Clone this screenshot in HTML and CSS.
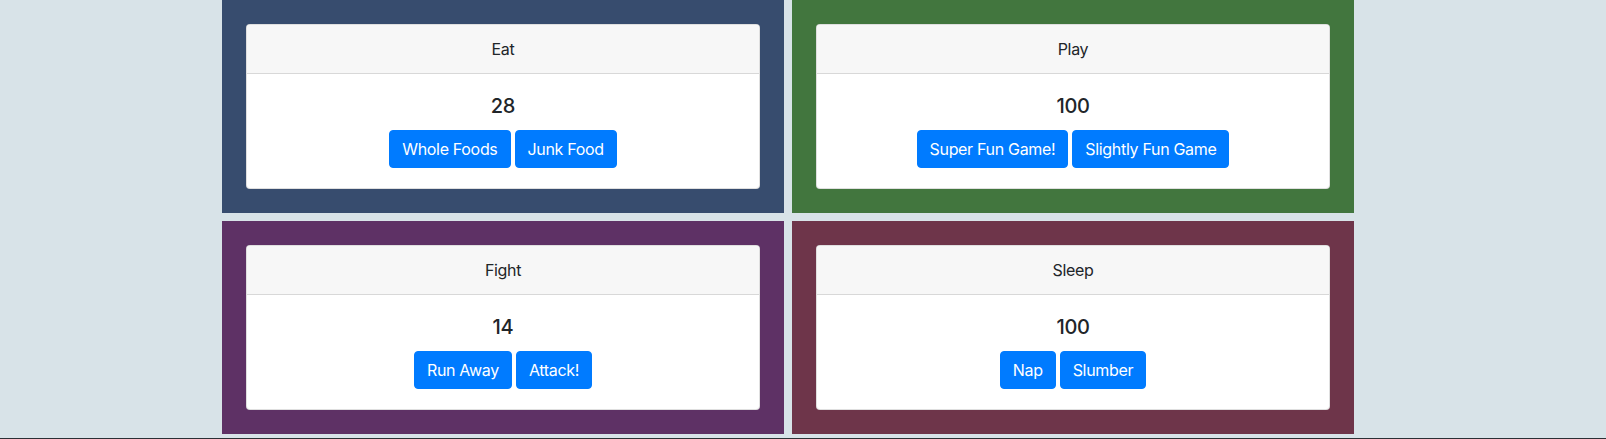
FILE: index.html
```html
<!DOCTYPE html>
<html lang="en">
<head>
<meta charset="utf-8">
<title>Pet Stats</title>
<link rel="stylesheet" href="styles.css">
</head>
<body>
<main class="board">
  <section class="panel panel-eat">
    <div class="card">
      <div class="card-header">Eat</div>
      <div class="card-body">
        <h5 class="card-title">28</h5>
        <div class="actions">
          <button class="btn">Whole Foods</button>
          <button class="btn">Junk Food</button>
        </div>
      </div>
    </div>
  </section>
  <section class="panel panel-play">
    <div class="card">
      <div class="card-header">Play</div>
      <div class="card-body">
        <h5 class="card-title">100</h5>
        <div class="actions">
          <button class="btn">Super Fun Game!</button>
          <button class="btn">Slightly Fun Game</button>
        </div>
      </div>
    </div>
  </section>
  <section class="panel panel-fight">
    <div class="card">
      <div class="card-header">Fight</div>
      <div class="card-body">
        <h5 class="card-title">14</h5>
        <div class="actions">
          <button class="btn">Run Away</button>
          <button class="btn">Attack!</button>
        </div>
      </div>
    </div>
  </section>
  <section class="panel panel-sleep">
    <div class="card">
      <div class="card-header">Sleep</div>
      <div class="card-body">
        <h5 class="card-title">100</h5>
        <div class="actions">
          <button class="btn">Nap</button>
          <button class="btn">Slumber</button>
        </div>
      </div>
    </div>
  </section>
</main>
<footer class="footer"></footer>
</body>
</html>
```

FILE: styles.css
```css
* {
  box-sizing: border-box;
}

html, body {
  margin: 0;
  padding: 0;
}

body {
  background: #d8e3e8;
  font-family: Inter, "Noto Sans", "Liberation Sans", sans-serif;
  font-size: 16px;
  line-height: 1.5;
  letter-spacing: -0.02em;
  color: #212529;
  height: 439px;
  overflow: hidden;
}

.board {
  display: grid;
  grid-template-columns: 562px 562px;
  grid-auto-rows: 213px;
  gap: 8px;
  margin-left: 222px;
  width: 1132px;
}

.panel {
  padding: 24px;
}

.panel-eat { background: #374c6e; }
.panel-play { background: #42763e; }
.panel-fight { background: #5e3165; }
.panel-sleep { background: #6e354a; }

.card {
  background: #fff;
  border: 1px solid rgba(0, 0, 0, 0.125);
  border-radius: 4px;
  overflow: hidden;
}

.card-header {
  padding: 12px 20px;
  background: #f7f7f7;
  border-bottom: 1px solid rgba(0, 0, 0, 0.125);
  text-align: center;
  line-height: 24px;
}

.card-body {
  padding: 20px;
  text-align: center;
}

.card-title {
  margin: 0 0 12px;
  font-size: 20px;
  font-weight: 500;
  line-height: 24px;
}

.actions {
  display: flex;
  justify-content: center;
  gap: 4px;
}

.btn {
  font-family: inherit;
  font-size: 16px;
  line-height: 24px;
  letter-spacing: -0.02em;
  padding: 6px 12px;
  color: #fff;
  background: #007bff;
  border: 1px solid #007bff;
  border-radius: 4px;
  cursor: pointer;
}

.footer {
  margin-top: 4px;
  border-top: 1px solid #2b3035;
  height: 1px;
}
```
